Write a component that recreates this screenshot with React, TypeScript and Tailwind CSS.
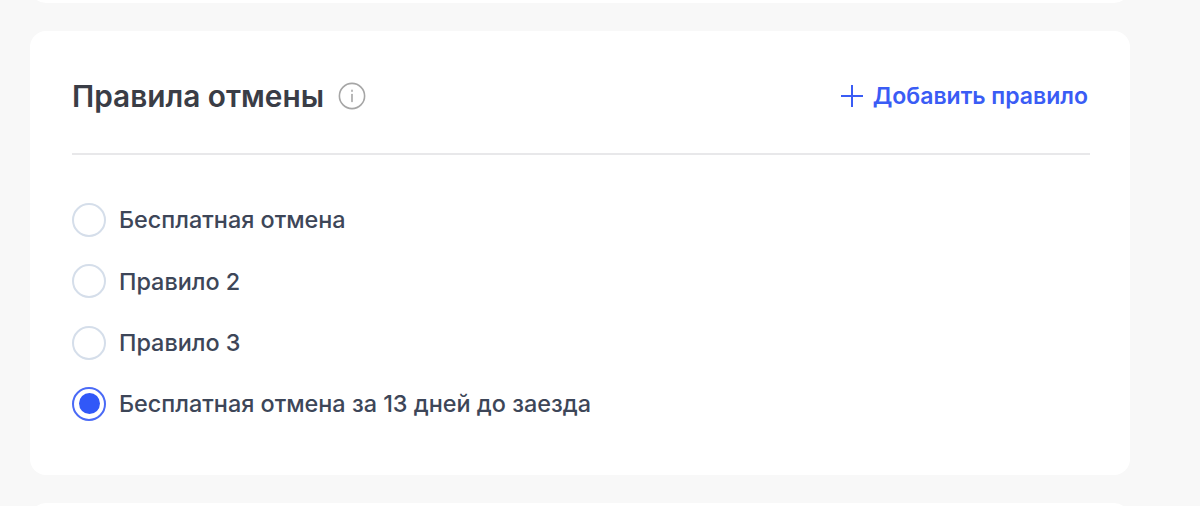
const rules = [
  { label: "Бесплатная отмена", checked: false },
  { label: "Правило 2", checked: false },
  { label: "Правило 3", checked: false },
  { label: "Бесплатная отмена за 13 дней до заезда", checked: true },
];

export default function App() {
  return (
    <div className="h-[506px] overflow-hidden bg-[#f8f8f8] px-[30px] font-['Inter',sans-serif]">
      {/* Previous card, mostly scrolled away */}
      <div className="-mt-[37px] h-[40px] w-[1100px] rounded-[16px] bg-white" />

      <div className="mt-[28px] h-[444px] w-[1100px] rounded-[16px] bg-white pl-[42px] pr-[40px]">
        {/* Header */}
        <div className="flex h-[124px] items-center justify-between border-b-2 border-[#e8e8ea] pt-[8px]">
          <div className="flex items-center gap-[14px]">
            <h2 className="text-[29.8px] font-semibold text-[#3a3d46]">Правила отмены</h2>
            <svg width="28" height="28" viewBox="0 0 28 28" fill="none" stroke="#a6a6a6" strokeWidth="1.6">
              <circle cx="14" cy="14" r="12.6" />
              <path d="M14 12.5V19.5" strokeLinecap="round" />
              <path d="M14 8.4V9.2" strokeLinecap="round" />
            </svg>
          </div>
          <button className="mr-[2px] flex items-center gap-[9px] text-[23px] font-semibold text-[#3a5cf5]">
            <svg width="24" height="24" viewBox="0 0 24 24" fill="none" stroke="#3a5cf5" strokeWidth="2">
              <path d="M12 1V23M1 12H23" />
            </svg>
            Добавить правило
          </button>
        </div>

        {/* Rule list */}
        <div className="mt-[48px] flex flex-col gap-[27.3px]">
          {rules.map((r) => (
            <label key={r.label} className="flex h-[34px] items-center gap-[13px]">
              {r.checked ? (
                <span className="flex h-[34px] w-[34px] items-center justify-center rounded-full border-2 border-[#4a6af6]">
                  <span className="h-[21px] w-[21px] rounded-full bg-[#3158f8]" />
                </span>
              ) : (
                <span className="h-[34px] w-[34px] rounded-full border-2 border-[#d5deea]" />
              )}
              <span className="text-[23.4px] font-medium text-[#3d4658]">{r.label}</span>
            </label>
          ))}
        </div>
      </div>

      {/* Next card */}
      <div className="mt-[28px] h-[40px] w-[1100px] rounded-[16px] bg-white" />
    </div>
  );
}
